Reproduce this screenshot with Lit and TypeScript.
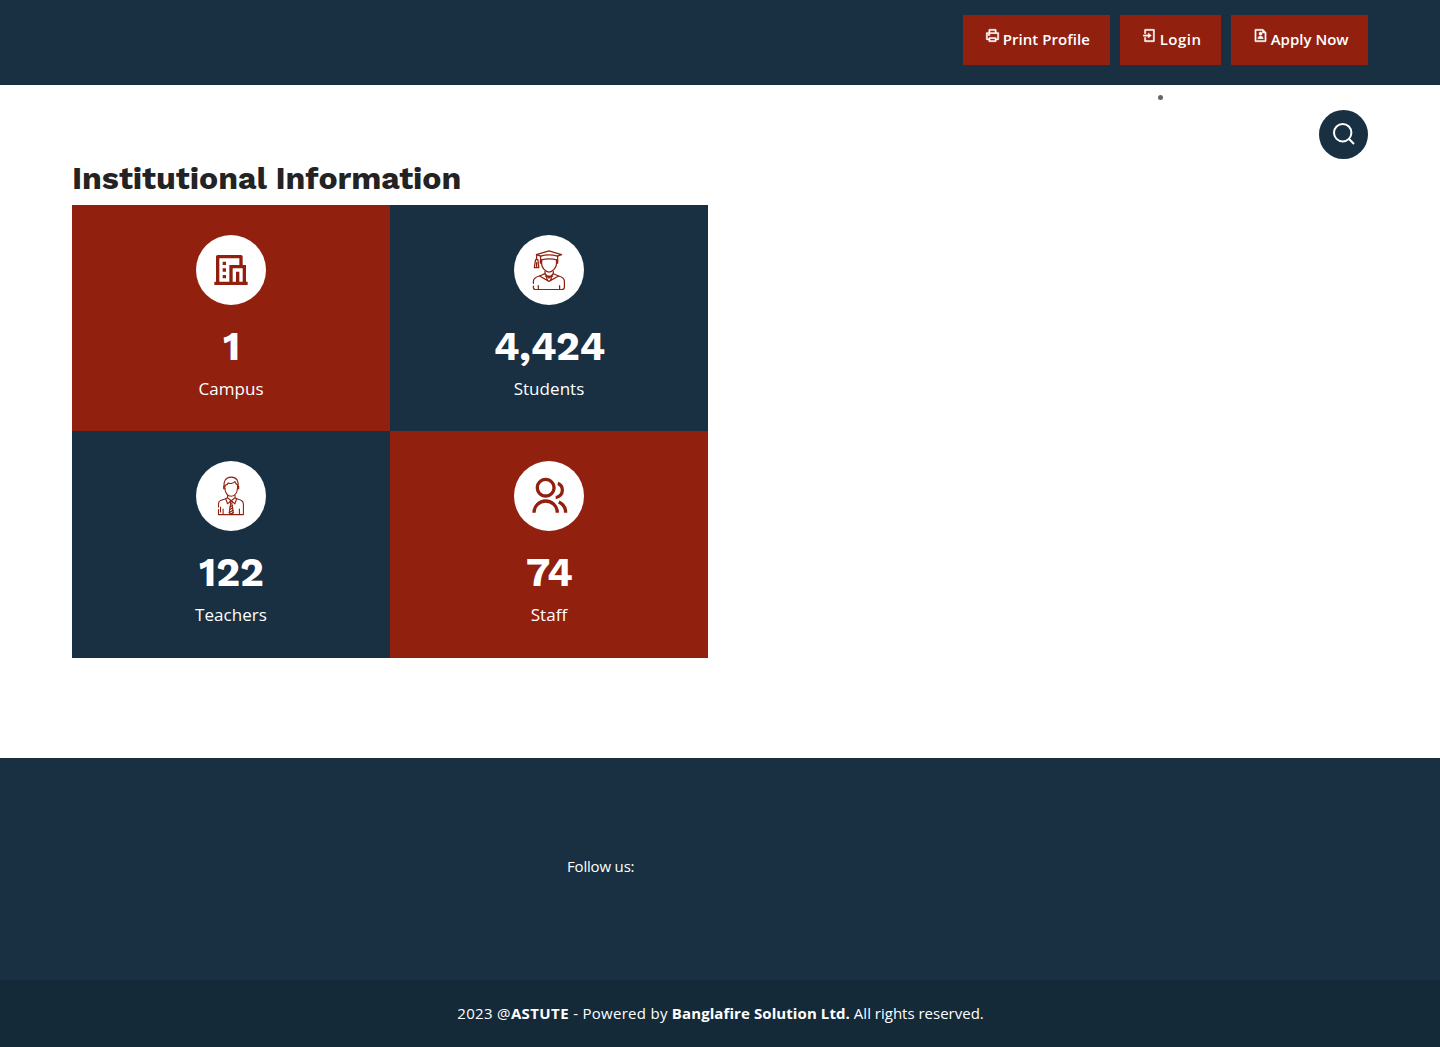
import { LitElement, html, css, svg } from "lit";
import { customElement } from "lit/decorators.js";

const PRINTER = svg`<path d="M6 19H3a1 1 0 0 1-1-1V8a1 1 0 0 1 1-1h3V3a1 1 0 0 1 1-1h10a1 1 0 0 1 1 1v4h3a1 1 0 0 1 1 1v10a1 1 0 0 1-1 1h-3v2a1 1 0 0 1-1 1H7a1 1 0 0 1-1-1v-2zm0-2v-1a1 1 0 0 1 1-1h10a1 1 0 0 1 1 1v1h2V9H4v8h2zM8 4v3h8V4H8zm0 13v3h8v-3H8zm-3-7h3v2H5v-2z"/>`;
const LOGIN = svg`<path d="M4 15h2v5h12V4H6v5H4V3a1 1 0 0 1 1-1h14a1 1 0 0 1 1 1v18a1 1 0 0 1-1 1H5a1 1 0 0 1-1-1v-6zm6-4V8l5 4-5 4v-3H2v-2h8z"/>`;
const FILE_USER = svg`<path d="M15 4H5v16h14V8h-4V4zM3 2.992C3 2.444 3.447 2 3.999 2H16l5 5v13.993A1 1 0 0 1 20.007 22H3.993A1 1 0 0 1 3 21.008V2.992zm9 8.508a2.5 2.5 0 1 1 0-5 2.5 2.5 0 0 1 0 5zM7.527 17a4.5 4.5 0 0 1 8.945 0H7.527z"/>`;
const HOTEL = svg`<path fill="currentColor" d="M22 21H2v-2h1V4a1 1 0 0 1 1-1h14a1 1 0 0 1 1 1v5h2v10h1v2zm-5-2h2v-8h-6v8h2v-6h2v6zm0-10V5H5v14h6V9h6zM7 11h2v2H7v-2zm0 4h2v2H7v-2zm0-8h2v2H7V7z"/>`;
const GROUP = svg`<path fill="currentColor" d="M2 22a8 8 0 1 1 16 0h-2a6 6 0 1 0-12 0H2zm8-9c-3.315 0-6-2.685-6-6s2.685-6 6-6 6 2.685 6 6-2.685 6-6 6zm0-2c2.21 0 4-1.79 4-4s-1.79-4-4-4-4 1.79-4 4 1.79 4 4 4zm8.284 3.703A8.002 8.002 0 0 1 23 22h-2a6.001 6.001 0 0 0-3.537-5.473l.82-1.824zm-.596-11.29A5.5 5.5 0 0 1 21 8.5a5.499 5.499 0 0 1-5 5.478v-2.013a3.5 3.5 0 0 0 1.041-6.609l.555-1.943z"/>`;
const STUDENT = svg`<g fill="none" stroke="currentColor" stroke-width="1.25" stroke-linecap="round" stroke-linejoin="round">
  <path d="M7.400 4.700 20 .8l12.500 3.900-4 1.500C23 4.600 17 4.600 11.600 6.200z"/>
  <path d="M11.600 6.200v4c5-1.700 12-1.700 17 0v-4"/>
  <path d="M12.600 10.300v3.500c0 4 4 8.200 7.400 8.200s7.500-4.200 7.500-8.200v-3.500"/>
  <path d="M12.600 13h-1.200v-2.800M27.500 13h1.200v-2.800"/>
  <path d="M7.600 4.900v4.800M6.600 9.700h2.300l.9 7.900H5.300zM7.600 12.500v4.800"/>
  <path d="M16 21.400v2.300L20 28l4.300-4.300v-2.300M16.300 26h7.500"/>
  <path d="M16 23.700 10.600 26l9.400 5.400 9.600-5.400-5.300-2.300M17.500 26.600l.7 3.700M22.500 26.600l-.7 3.700"/>
  <path d="M10.600 26c-4 1-6.200 2.300-6.200 5.300v2M4.400 36v1.600c0 1.300.9 2 2 2h26.400c1.700 0 2.600-.8 2.600-2.300v-6c0-3-2-4.300-5.800-5.300M9.300 35.700v3.900M30.600 35.700v3.900"/>
</g>`;
const TEACHER = svg`<g fill="none" stroke="currentColor" stroke-width="1.100" stroke-linecap="round" stroke-linejoin="round">
  <path d="M13 11.300c-.7-5.500 1.200-10 7-10.200 6-.2 7.700 4.200 7.200 10.200"/>
  <path d="M13.900 12V9.200c2.600 0 3-1.200 3.300-2.200 2.500 1.200 5.500-.1 6.600-1.500.6 2 2 3 2.700 3.500v3c0 4.400-2.500 8.300-6.300 8.300S13.900 16.600 13.900 12"/>
  <path d="M13.900 10.200h-1.200v2.600h1.300M26.500 10.200h1.200v2.600h-1.300"/>
  <path d="m16.700 19.300-.2 2.500 3.700 2.900 3.900-2.900-.1-2.500M16.500 21.700l-1.800 1.100 1.800 5 3.700-3.100 3.700 3.100 1.700-5-1.500-1.100"/>
  <path d="m19 25.500 1.200-.8 1.200.8-.6 2 1.500 9.300-2.100 1.700-2-1.700 1.400-9.300z"/>
  <path d="m18.900 31 2.700-1.500m-3.100 4.300 3.400-2m-3.700 4.600 4-2.200m-3 4.100 3.100-1.900"/>
  <path d="M14.700 22.800C10 24 7.500 24.500 7.500 28v3M7.500 33.500v5.100h24.900V28c0-3.500-2.700-4-6.800-5.200M12.100 33v5.600M28.400 33v5.600M9.500 31v5"/>
</g>`;

const ACTIONS = [
  { label: "Print Profile", icon: PRINTER, kind: "print" },
  { label: "Login", icon: LOGIN, kind: "login" },
  { label: "Apply Now", icon: FILE_USER, kind: "apply" },
];
const STATS = [
  { value: "1", label: "Campus", icon: HOTEL, box: "0 0 24 24", tone: "red" },
  { value: "4,424", label: "Students", icon: STUDENT, box: "0 0 40 40", tone: "navy" },
  { value: "122", label: "Teachers", icon: TEACHER, box: "0 0 40 40", tone: "navy" },
  { value: "74", label: "Staff", icon: GROUP, box: "0 0 24 24", tone: "red" },
];

@customElement("app-root")
export class AppRoot extends LitElement {
  static styles = css`
    :host { display: flex; flex-direction: column; height: 1047px; overflow: hidden; background: #fff;
      font-family: "Open Sans", sans-serif; font-size: 15px; color: #fff; }
    * { box-sizing: border-box; }
    svg { display: block; }
    .top { height: 85px; padding: 15px 72px 20px; background: #192f42; display: flex; justify-content: flex-end; gap: 10px; }
    .btn { height: 50px; padding: 0 0 2px 21.700px; background: #92200f; color: #fff; display: flex; align-items: center;
      font-weight: 600; white-space: nowrap; text-decoration: none; }
    .btn svg { width: 15px; height: 15px; fill: #fff; stroke: #fff; stroke-width: .7; margin: 0 3px 7.500px 0; }
    .print { width: 147px; letter-spacing: .06px; }
    .login { width: 101px; letter-spacing: .5px; }
    .apply { width: 137px; }
    .nav { height: 75px; padding: 10px 72px 0; display: flex; justify-content: flex-end; align-items: flex-start; }
    .dot { width: 5px; height: 5px; border-radius: 50%; background: #666; margin-right: 156px; }
    .search { width: 49px; height: 49px; margin-top: 15px; border: 0; padding: 0; border-radius: 50%; background: #192f42;
      display: flex; align-items: center; justify-content: center; }
    .info { height: 598px; padding: 0 72px; }
    h2 { margin: 0; height: 45px; line-height: 37px; font-family: "Work Sans", Inter, sans-serif; font-size: 32px; font-weight: 700;
      color: #232323; white-space: nowrap; letter-spacing: -.04px; }
    .grid { width: 636px; height: 453px; display: grid; grid-template-columns: 1fr 1fr; grid-template-rows: 226px 227px; }
    .card { display: flex; flex-direction: column; align-items: center; padding-top: 30px; }
    .red { background: #92200f; }
    .navy { background: #192f42; }
    .disc { width: 70px; height: 70px; border-radius: 50%; background: #fff; color: #92200f; display: flex; align-items: center; justify-content: center; }
    .disc svg { width: 40px; height: 40px; }
    .value { margin-top: 17px; padding-left: 1px; height: 50px; line-height: 50px; font-family: "Work Sans", Inter, sans-serif; font-size: 40px; font-weight: 700; }
    .label { margin-top: 4px; height: 26px; line-height: 26px; font-size: 17px; letter-spacing: .05px; }
    .follow { height: 222px; background: #192f42; padding: 95px 0 0 567px; line-height: 26px; letter-spacing: -.18px; }
    .legal { height: 67px; padding-left: 1px; background: #142a39; text-align: center; line-height: 67px; }
    .w1 { letter-spacing: .33px; }
    .w2 { letter-spacing: .4px; }
    .w3 { letter-spacing: .28px; }
    .w4 { letter-spacing: .09px; }
  `;

  render() {
    return html`
      <header class="top">
        ${ACTIONS.map((a) => html`<a class="btn ${a.kind}"><svg viewBox="0 0 24 24">${a.icon}</svg><span>${a.label}</span></a>`)}
      </header>
      <nav class="nav">
        <span class="dot"></span>
        <button class="search" aria-label="Search">
          <svg width="24" height="24" viewBox="0 0 24 24" fill="none" stroke="#fff" stroke-width="2">
            <circle cx="10.700" cy="9.700" r="8.700"/><path d="m16.800 15.800 5.200 5.200"/>
          </svg>
        </button>
      </nav>
      <main class="info">
        <h2>Institutional Information</h2>
        <section class="grid">
          ${STATS.map((s) => html`<div class="card ${s.tone}">
            <div class="disc"><svg viewBox=${s.box}>${s.icon}</svg></div>
            <div class="value">${s.value}</div>
            <div class="label">${s.label}</div>
          </div>`)}
        </section>
      </main>
      <footer>
        <div class="follow">Follow us:</div>
        <div class="legal"><span class="w1">2023 @</span><b class="w2">ASTUTE</b><span class="w3"> - Powered by </span><b class="w4">Banglafire Solution Ltd.</b> All rights reserved.</div>
      </footer>
    `;
  }
}
